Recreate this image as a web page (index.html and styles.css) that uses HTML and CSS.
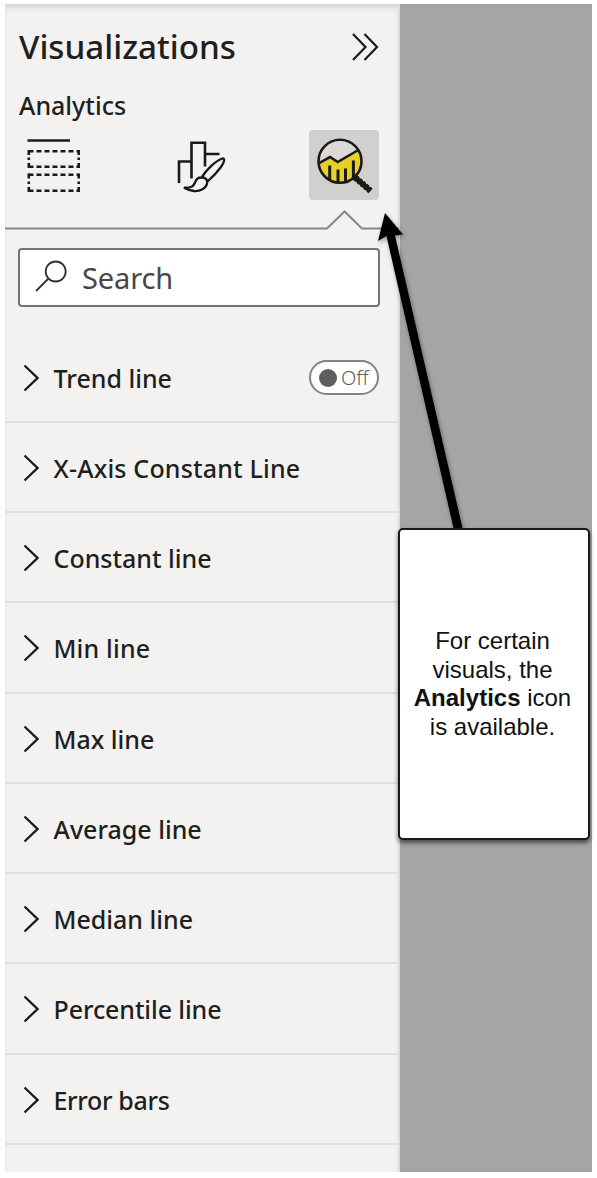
FILE: index.html
```
<!DOCTYPE html>
<html lang="en">
<head>
<meta charset="utf-8">
<title>Visualizations</title>
<link rel="stylesheet" href="styles.css">
</head>
<body>
<main class="stage">
  <section class="pane">
    <header class="pane-header">
      <h1 class="title">Visualizations</h1>
      <svg class="collapse" width="28" height="30" viewBox="0 0 28 30"><path d="M2 2 14.500 15 2 28M13.500 2 26 15 13.500 28"/></svg>
    </header>
    <h2 class="subtitle">Analytics</h2>
    <nav class="tabs">
      <div class="tab">
        <svg width="70" height="70" viewBox="0 0 70 70">
          <path class="ink" d="M9.500 10.500h42.500"/>
          <g fill="none" stroke="#1b1a19" stroke-width="2.600">
            <path stroke-dasharray="5 3" d="M10.500 21.200H61M10.500 36.800H61M10.500 44.700H61M10.500 60.700H61"/>
            <path d="M10.800 20v5M10.800 27.500v2.500M10.800 33v5M60.700 20v5M60.700 27.500v2.500M60.700 33v5M10.800 43.500v5M10.800 51.500v2.500M10.800 57v5M60.700 43.500v5M60.700 51.500v2.500M60.700 57v5"/>
          </g>
        </svg>
      </div>
      <div class="tab">
        <svg width="70" height="70" viewBox="-4.500 0 70 70">
          <path class="ink" d="M10.500 53V31.500H22.500M23 48.500V12.700H36.500V36.500M37 24H51"/>
          <path class="ink thin" d="M33 47.500C38 40 47 30.500 54 28.500C57 28 55.500 33 52.500 37C48.500 42.500 43 48 39 51.500M33 47.500C36 47.500 38.500 49 38.800 52C38 59 31 61.500 25.500 61C22 60.500 18.500 59.500 15.500 57.700C23 58 25 56.500 26.500 52.500C27.500 49.500 29.500 47.300 33 47.500Z"/>
        </svg>
      </div>
      <div class="tab tab-active">
        <svg width="70" height="70" viewBox="0 0 70 70">
          <circle cx="31" cy="31.300" r="21.500" fill="#dcdad8"/>
          <path fill="#e8cf27" d="M10 33 21 27 28.700 32 49 20.500C52 25 53.500 33 51 39.500C47 50 37 54 28 52.600C18 51 10 43 10 33Z"/>
          <path class="ink" d="M10.500 32.800 21 27 28.700 32 49.300 20"/>
          <path class="ink bars" d="M20.700 35.500V51M29 39.500V53M36.500 38.500V52.500M44.400 30.500V48"/>
          <circle class="ink" cx="31" cy="31.300" r="21.500"/>
          <path fill="none" stroke="#1b1a19" stroke-width="5" d="M45.500 47 61.500 60.800"/>
          <path fill="none" stroke="#1b1a19" stroke-width="6.400" stroke-dasharray="2.800 1.500" d="M46.500 47.800 61.500 60.800"/>
        </svg>
      </div>
    </nav>
    <svg class="pointer" width="394" height="24" viewBox="0 0 394 24"><path d="M0 20.500H322L339.500 3.500 357 20.500H394"/></svg>
    <div class="search">
      <svg width="34" height="34" viewBox="0 0 34 34"><circle cx="21.700" cy="12.500" r="10"/><path d="M14.500 19.500 2 32"/></svg>
      <span class="search-text">Search</span>
    </div>
    <ul class="cards">
      <li class="card"><svg class="chevron" viewBox="0 0 16 28"><path d="M1.500 1.500 14.500 14 1.500 26.500"/></svg><span class="label">Trend line</span><span class="toggle"><i class="knob"></i><span class="off">Off</span></span></li>
      <li class="card"><svg class="chevron" viewBox="0 0 16 28"><path d="M1.500 1.500 14.500 14 1.500 26.500"/></svg><span class="label loose">X-Axis Constant Line</span></li>
      <li class="card"><svg class="chevron" viewBox="0 0 16 28"><path d="M1.500 1.500 14.500 14 1.500 26.500"/></svg><span class="label">Constant line</span></li>
      <li class="card"><svg class="chevron" viewBox="0 0 16 28"><path d="M1.500 1.500 14.500 14 1.500 26.500"/></svg><span class="label loose">Min line</span></li>
      <li class="card"><svg class="chevron" viewBox="0 0 16 28"><path d="M1.500 1.500 14.500 14 1.500 26.500"/></svg><span class="label">Max line</span></li>
      <li class="card"><svg class="chevron" viewBox="0 0 16 28"><path d="M1.500 1.500 14.500 14 1.500 26.500"/></svg><span class="label">Average line</span></li>
      <li class="card"><svg class="chevron" viewBox="0 0 16 28"><path d="M1.500 1.500 14.500 14 1.500 26.500"/></svg><span class="label">Median line</span></li>
      <li class="card"><svg class="chevron" viewBox="0 0 16 28"><path d="M1.500 1.500 14.500 14 1.500 26.500"/></svg><span class="label snug">Percentile line</span></li>
      <li class="card"><svg class="chevron" viewBox="0 0 16 28"><path d="M1.500 1.500 14.500 14 1.500 26.500"/></svg><span class="label tight">Error bars</span></li>
    </ul>
  </section>
  <svg class="arrow" width="100" height="330" viewBox="370 205 100 330"><path d="M385 213 403 234.500 395 235.500 462.500 528H453.500L386.500 236 378 241Z"/></svg>
  <aside class="callout">For certain<br>visuals, the<br><span><b>Analytics</b> icon</span>is available.</aside>
</main>
</body>
</html>
```
FILE: styles.css
```
* { box-sizing: border-box; }
body { margin: 0; background: #fff; font-family: "Noto Sans", "Open Sans", sans-serif; color: #201f1e; }
.stage { position: relative; margin: 4px 5px 0 5px; width: 587px; height: 1168px; background: #a5a5a5; }
.pane { width: 395px; height: 1168px; background: #f3f2f1; border-right: 2px solid #dddcdb; box-shadow: inset 0 5px 6px -3px #c8c8c8; }
.pane-header { height: 86px; padding: 0 19px 0 14px; display: flex; align-items: center; justify-content: space-between; }
.title { margin: 0; font-size: 33.200px; line-height: 46px; font-weight: 500; }
.collapse { fill: none; stroke: #1b1a19; stroke-width: 2.200; }
.subtitle { margin: 0; padding-left: 14px; height: 40px; line-height: 30px; font-size: 25px; font-weight: 500; }
.tabs { display: flex; justify-content: space-between; padding: 0 19px 0 13px; height: 70px; }
.tab { width: 70px; height: 70px; border-radius: 4px; }
.tab svg { display: block; }
.tab-active { background: #d1d0ce; }
.ink { fill: none; stroke: #1b1a19; stroke-width: 2.600; }
.thin { stroke-width: 2.300; }
.bars { stroke-width: 3; }
.pointer { display: block; margin-top: 8px; fill: none; stroke: #8a8886; stroke-width: 2; }
.search { margin: 16px 0 0 13px; width: 362px; height: 59px; border: 2px solid #747372; border-radius: 4px; background: #fff; display: flex; align-items: center; padding: 0 14px; gap: 14px; }
.search svg { fill: none; stroke: #323130; stroke-width: 1.800; margin-top: -4px; }
.search-text { font-size: 29px; color: #484644; line-height: 36px; letter-spacing: -.1px; padding-top: 1px; }
.cards { list-style: none; margin: 25.500px 0 0; padding: 0; }
.card { height: 90.250px; border-bottom: 2px solid #e1dfdd; display: flex; align-items: center; padding: 2px 19px 0 18px; }
.chevron { width: 16px; height: 28px; fill: none; stroke: #1b1a19; stroke-width: 2.300; margin-right: 14.500px; }
.label { font-size: 25px; font-weight: 500; line-height: 34px; }
.loose { letter-spacing: .17px; }
.snug { letter-spacing: -.1px; }
.tight { letter-spacing: -.35px; }
.toggle { margin-left: auto; width: 70px; height: 35px; border: 2px solid #858381; border-radius: 18px; background: #fff; display: flex; align-items: center; padding-left: 8px; gap: 4px; }
.knob { width: 18px; height: 18px; border-radius: 50%; background: #605e5c; }
.off { font-size: 20px; color: #605e5c; font-weight: 300; line-height: 24px; }
.arrow { position: absolute; left: 365px; top: 201px; fill: #000; filter: drop-shadow(1px 2px 2px rgba(0,0,0,.4)); }
.callout { position: absolute; left: 393px; top: 524px; width: 192px; height: 312px; padding-right: 3px; border: 2px solid #17171c; border-radius: 5px; background: #fff; display: flex; flex-direction: column; justify-content: center; text-align: center; font: 24px/28.500px "Liberation Sans", Arial, sans-serif; color: #111; box-shadow: 0 3px 4px rgba(0,0,0,.55); }
```
